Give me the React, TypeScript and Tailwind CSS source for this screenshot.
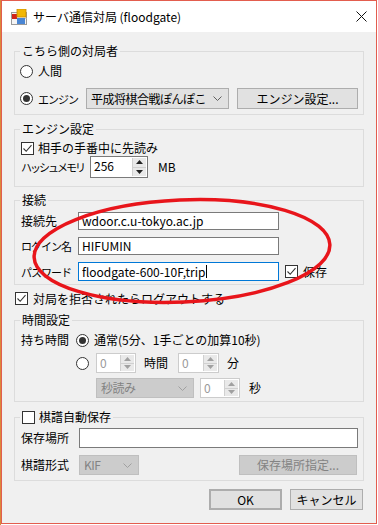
import React from 'react';

// Win10 風の小さな部品
const Radio = ({ checked }: { checked?: boolean }) => (
  <span className="flex h-[13px] w-[13px] shrink-0 items-center justify-center rounded-full border border-[#333333] bg-white">
    {checked && <span className="h-[7px] w-[7px] rounded-full bg-[#333333]" />}
  </span>
);

const Check = ({ checked }: { checked?: boolean }) => (
  <span className="flex h-[13px] w-[13px] shrink-0 items-center justify-center border border-[#333333] bg-white">
    {checked && (
      <svg width="11" height="11" viewBox="0 0 11 11">
        <path d="M1.5 5.5 L4.2 8.3 L9.5 2.2" fill="none" stroke="#333333" strokeWidth="1.1" />
      </svg>
    )}
  </span>
);

const Chevron = ({ color }: { color: string }) => (
  <svg width="9" height="5" viewBox="0 0 9 5" className="shrink-0">
    <path d="M0.5 0.5 L4.5 4.5 L8.5 0.5" fill="none" stroke={color} strokeWidth="1" />
  </svg>
);

const Arrows = ({ color }: { color: string }) => (
  <div className="flex h-full w-[14px] flex-col border-l border-[#d0d0d0] bg-[#e9e9e9]">
    <div className="flex flex-1 items-center justify-center border-b border-[#d0d0d0]">
      <svg width="7" height="4" viewBox="0 0 7 4">
        <path d="M0 4 L3.5 0 L7 4 Z" fill={color} />
      </svg>
    </div>
    <div className="flex flex-1 items-center justify-center">
      <svg width="7" height="4" viewBox="0 0 7 4">
        <path d="M0 0 L3.5 4 L7 0 Z" fill={color} />
      </svg>
    </div>
  </div>
);

const Spin = ({ value, disabled, className }: { value: string; disabled?: boolean; className: string }) => (
  <div
    className={`flex shrink-0 border bg-white p-[1px] ${
      disabled ? 'border-[#cccccc] text-[#9a9a9a]' : 'border-[#7a7a7a] text-black'
    } ${className}`}
  >
    <span className="flex-1 pl-[2px] leading-[16px]">{value}</span>
    <Arrows color={disabled ? '#a0a0a0' : '#222222'} />
  </div>
);

const Combo = ({ value, disabled, className }: { value: string; disabled?: boolean; className: string }) => (
  <div
    className={`flex shrink-0 items-center justify-between border pl-[4px] pr-[6px] ${
      disabled ? 'border-[#bfbfbf] bg-[#cccccc] text-[#838383]' : 'border-[#adadad] bg-[#e1e1e1] text-black'
    } ${className}`}
  >
    <span className="whitespace-nowrap tracking-[-0.5px]">{value}</span>
    <Chevron color={disabled ? '#a0a0a0' : '#606060'} />
  </div>
);

const Btn = ({
  children,
  disabled,
  className,
}: {
  children: React.ReactNode;
  disabled?: boolean;
  className: string;
}) => (
  <div
    className={`flex shrink-0 items-center justify-center border whitespace-nowrap ${
      disabled ? 'border-[#bfbfbf] bg-[#cccccc] text-[#838383]' : 'border-[#adadad] bg-[#e1e1e1] text-black'
    } ${className}`}
  >
    {children}
  </div>
);

const TextBox = ({ value, focused, className }: { value: string; focused?: boolean; className: string }) => (
  <div
    className={`flex shrink-0 items-center border bg-white pl-[3px] whitespace-nowrap ${
      focused ? 'border-[#0078d7]' : 'border-[#7a7a7a]'
    } ${className}`}
  >
    {value}
    {focused && <span className="ml-[1px] h-[13px] w-[1px] bg-black" />}
  </div>
);

const Group = ({
  legend,
  className,
  children,
}: {
  legend: React.ReactNode;
  className: string;
  children: React.ReactNode;
}) => (
  <div className={`relative mx-[12px] border border-[#dcdcdc] ${className}`}>
    <div className="absolute top-[-9px] left-[5px] flex items-center bg-[#f0f0f0] px-[2px] leading-[16px]">
      {legend}
    </div>
    {children}
  </div>
);

const AppIcon = () => (
  <svg width="16" height="16" viewBox="0 0 16 16" className="shrink-0">
    <rect x="0.5" y="3.5" width="15" height="12" fill="#f4f4f4" stroke="#9a9a9a" />
    <line x1="0.5" y1="9.5" x2="15.5" y2="9.5" stroke="#c8c8c8" />
    <rect x="1" y="5" width="5" height="5" fill="#d0241c" />
    <rect x="6" y="0" width="9" height="8" fill="#f2b705" stroke="#c98a00" strokeWidth="0.8" />
    <rect x="6" y="9" width="8" height="6" fill="#4a86d4" />
  </svg>
);

export default function App() {
  return (
    <div
      className="relative flex h-[525px] w-[378px] overflow-hidden bg-white text-[12px] leading-[16px] text-black"
      style={{ fontFamily: '"Noto Sans CJK JP", "Noto Sans", sans-serif' }}
    >
      <div className="h-full w-[1px] bg-[#d8893b]" />
      <div className="flex h-[524px] w-[376px] flex-col border border-[#e35d4e] bg-[#f0f0f0]">
        {/* タイトルバー */}
        <div className="flex h-[31px] items-center bg-white pr-[9px] pl-[9px]">
          <AppIcon />
          <span className="ml-[6px] whitespace-nowrap">サーバ通信対局 (floodgate)</span>
          <svg width="11" height="11" viewBox="0 0 11 11" className="ml-auto">
            <path d="M0.5 0.5 L10.5 10.5 M10.5 0.5 L0.5 10.5" stroke="#111111" strokeWidth="1" />
          </svg>
        </div>

        {/* こちら側の対局者 */}
        <Group legend="こちら側の対局者" className="mt-[19px] h-[64px]">
          <div className="pt-[11px] pl-[5px]">
            <div className="flex h-[16px] items-center gap-[5px]">
              <Radio />
              <span>人間</span>
            </div>
            <div className="mt-[9px] flex h-[21px] items-center">
              <Radio checked />
              <span className="ml-[5px] w-[48px] text-[11px] whitespace-nowrap tracking-[-1px]">エンジン</span>
              <Combo value="平成将棋合戦ぽんぽこ" className="h-[21px] w-[143px]" />
              <Btn className="ml-[8px] h-[21px] w-[121px]">エンジン設定...</Btn>
            </div>
          </div>
        </Group>

        {/* エンジン設定 */}
        <Group legend="エンジン設定" className="mt-[14px] h-[58px]">
          <div className="pt-[10px] pl-[6px]">
            <div className="flex h-[16px] items-center gap-[4px]">
              <Check checked />
              <span>相手の手番中に先読み</span>
            </div>
            <div className="flex h-[22px] items-center">
              <span className="w-[69px] text-[11px] whitespace-nowrap tracking-[-2px]">ハッシュメモリ</span>
              <Spin value="256" className="h-[22px] w-[58px]" />
              <span className="ml-[10px]">MB</span>
            </div>
          </div>
        </Group>

        {/* 接続 */}
        <Group legend="接続" className="mt-[13px] h-[85px]">
          <div className="pt-[11px] pl-[6px]">
            <div className="flex h-[18px] items-center">
              <span className="w-[57px]">接続先</span>
              <TextBox value="wdoor.c.u-tokyo.ac.jp" className="h-[18px] w-[201px]" />
            </div>
            <div className="mt-[7px] flex h-[18px] items-center">
              <span className="w-[57px] text-[11px] whitespace-nowrap tracking-[-1px]">ログイン名</span>
              <TextBox value="HIFUMIN" className="h-[18px] w-[201px]" />
            </div>
            <div className="mt-[7px] flex h-[19px] items-center">
              <span className="w-[57px] text-[11px] whitespace-nowrap tracking-[-1px]">パスワード</span>
              <TextBox value="floodgate-600-10F,trip" focused className="h-[19px] w-[201px]" />
              <span className="ml-[6px] flex items-center gap-[5px]">
                <Check checked />
                <span>保存</span>
              </span>
            </div>
          </div>
        </Group>

        <div className="mt-[7px] flex h-[13px] items-center gap-[5px] pl-[13px]">
          <Check checked />
          <span>対局を拒否されたらログアウトする</span>
        </div>

        {/* 時間設定 */}
        <Group legend="時間設定" className="mt-[15px] h-[82px]">
          <div className="pt-[11px] pl-[6px]">
            <div className="flex h-[16px] items-center">
              <span className="w-[55px]">持ち時間</span>
              <Radio checked />
              <span className="ml-[5px] whitespace-nowrap">通常(5分、1手ごとの加算10秒)</span>
            </div>
            <div className="mt-[5px] flex h-[20px] items-center pl-[55px]">
              <Radio />
              <Spin value="0" disabled className="ml-[7px] h-[20px] w-[40px]" />
              <span className="ml-[8px] w-[34px]">時間</span>
              <Spin value="0" disabled className="h-[20px] w-[41px]" />
              <span className="ml-[8px]">分</span>
            </div>
            <div className="mt-[5px] flex h-[20px] items-center pl-[75px]">
              <Combo value="秒読み" disabled className="h-[20px] w-[98px]" />
              <Spin value="0" disabled className="ml-[6px] h-[20px] w-[40px]" />
              <span className="ml-[9px]">秒</span>
            </div>
          </div>
        </Group>

        {/* 棋譜自動保存 */}
        <Group
          legend={
            <span className="flex items-center gap-[4px]">
              <Check />
              <span>棋譜自動保存</span>
            </span>
          }
          className="mt-[15px] h-[64px]"
        >
          <div className="pt-[10px] pl-[6px]">
            <div className="flex h-[20px] items-center">
              <span className="w-[58px]">保存場所</span>
              <TextBox value="" className="h-[20px] w-[279px]" />
            </div>
            <div className="mt-[7px] flex h-[20px] items-center">
              <span className="w-[58px]">棋譜形式</span>
              <Combo value="KIF" disabled className="h-[20px] w-[60px]" />
              <Btn disabled className="ml-[100px] h-[20px] w-[118px]">
                保存場所指定...
              </Btn>
            </div>
          </div>
        </Group>

        <div className="mt-[8px] flex h-[21px] items-center pl-[207px]">
          <Btn className="h-[21px] w-[73px] border-2 border-[#0078d7]">OK</Btn>
          <Btn className="ml-[8px] h-[21px] w-[73px]">キャンセル</Btn>
        </div>
      </div>
      <div className="h-full w-[1px] bg-white" />

      {/* 赤い手書きの丸 */}
      <svg width="378" height="525" className="pointer-events-none absolute top-0 left-0">
        <ellipse
          cx="182"
          cy="251"
          rx="148"
          ry="51"
          transform="rotate(-2.5 182 251)"
          fill="none"
          stroke="#e8151b"
          strokeWidth="3.5"
        />
      </svg>
    </div>
  );
}
